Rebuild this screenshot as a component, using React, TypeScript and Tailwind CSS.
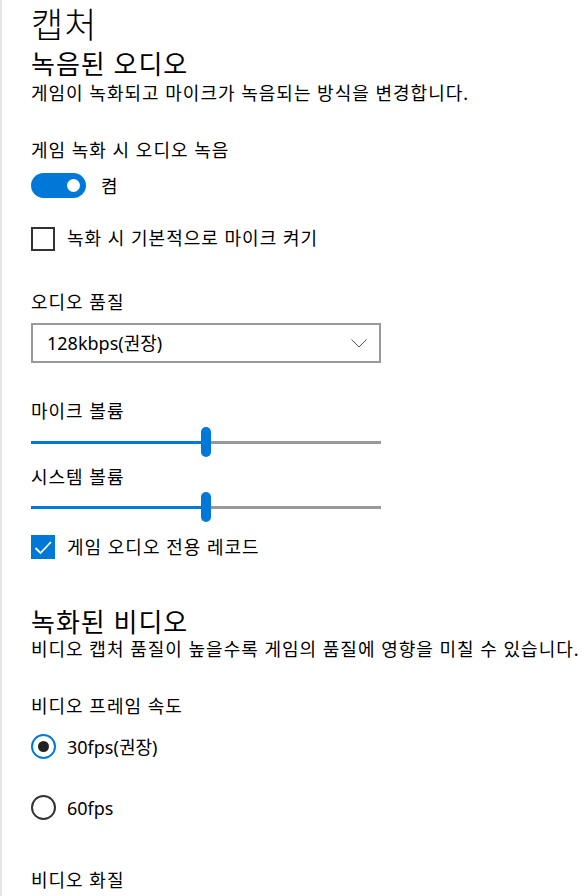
import { useState } from "react";

const font = {
  fontFamily: '"Noto Sans", "Noto Sans CJK KR", sans-serif',
};

function Slider({ value }: { value: number }) {
  return (
    <div className="relative h-[30px] w-[350px]">
      <div className="absolute left-0 right-0 top-[14px] flex h-[3px]">
        <div className="h-full bg-[#0078d7]" style={{ width: `${value}%` }} />
        <div className="h-full flex-1 bg-[#999999]" />
      </div>
      <div
        className="absolute top-0 h-[30px] w-[10px] rounded-full bg-[#0078d7]"
        style={{ left: `calc(${value}% - 5px)` }}
      />
    </div>
  );
}

function Check({ on }: { on: boolean }) {
  return (
    <span
      className={`flex h-[24px] w-[24px] shrink-0 items-center justify-center ${
        on ? "bg-[#0078d7]" : "border-2 border-[#333333]"
      }`}
    >
      {on && (
        <svg width="24" height="24" viewBox="0 0 24 24">
          <polyline
            points="4.5,13 9.5,18 20,7"
            fill="none"
            stroke="white"
            strokeWidth="1.8"
          />
        </svg>
      )}
    </span>
  );
}

export default function App() {
  const [audioOn, setAudioOn] = useState(true);
  const [micDefault, setMicDefault] = useState(false);
  const [gameOnly, setGameOnly] = useState(true);
  const [fps, setFps] = useState("30");

  return (
    <div
      className="min-h-screen border-l-2 border-[#e6e6e6] bg-white pl-[29px] text-black"
      style={font}
    >
      <h1 className="h-[50px] text-[35px] font-light leading-[50px] tracking-[1px]">
        캡처
      </h1>

      <h2 className="h-[28px] text-[26px] leading-[28px] tracking-[1px]">
        녹음된 오디오
      </h2>
      <p className="mt-[3px] h-[24px] text-[18px] leading-[24px] tracking-[1px]">
        게임이 녹화되고 마이크가 녹음되는 방식을 변경합니다.
      </p>

      <div className="mt-[33px] h-[24px] text-[18px] leading-[24px] tracking-[1px]">
        게임 녹화 시 오디오 녹음
      </div>
      <div className="mt-[11px] flex h-[25px] items-center">
        <button
          type="button"
          onClick={() => setAudioOn(!audioOn)}
          className={`flex h-[25px] w-[55px] items-center rounded-full px-[6px] ${
            audioOn ? "justify-end bg-[#0078d7]" : "justify-start border-2 border-[#333333] bg-white"
          }`}
        >
          <span
            className={`block h-[13px] w-[13px] rounded-full ${
              audioOn ? "bg-white" : "bg-[#333333]"
            }`}
          />
        </button>
        <span className="ml-[15px] text-[18px] leading-[24px]">
          {audioOn ? "켬" : "끔"}
        </span>
      </div>

      <label
        onClick={() => setMicDefault(!micDefault)}
        className="mt-[29px] flex h-[24px] cursor-pointer items-center"
      >
        <Check on={micDefault} />
        <span className="ml-[12px] -translate-y-[1px] text-[18px] leading-[24px] tracking-[1px]">
          녹화 시 기본적으로 마이크 켜기
        </span>
      </label>

      <div className="mt-[39px] h-[24px] text-[18px] leading-[24px] tracking-[1px]">
        오디오 품질
      </div>
      <div className="mt-[9px] flex h-[40px] w-[350px] items-center justify-between border-2 border-[#999999] bg-white pl-[14px] pr-[12px]">
        <span className="text-[18px] leading-[24px]">128kbps(권장)</span>
        <svg width="16" height="9" viewBox="0 0 16 9">
          <polyline
            points="0.5,0.5 8,8 15.5,0.5"
            fill="none"
            stroke="#555555"
            strokeWidth="1"
          />
        </svg>
      </div>

      <div className="mt-[36px] h-[24px] text-[18px] leading-[24px] tracking-[1px]">
        마이크 볼륨
      </div>
      <div className="mt-[4px]">
        <Slider value={50} />
      </div>

      <div className="mt-[8px] h-[24px] text-[18px] leading-[24px] tracking-[1px]">
        시스템 볼륨
      </div>
      <div className="mt-[3px]">
        <Slider value={50} />
      </div>

      <label
        onClick={() => setGameOnly(!gameOnly)}
        className="mt-[13px] flex h-[24px] cursor-pointer items-center"
      >
        <Check on={gameOnly} />
        <span className="ml-[12px] text-[18px] leading-[24px] tracking-[1px]">
          게임 오디오 전용 레코드
        </span>
      </label>

      <h2 className="mt-[47px] h-[32px] text-[26px] leading-[32px] tracking-[1px]">
        녹화된 비디오
      </h2>
      <p className="h-[22px] whitespace-nowrap text-[18px] leading-[22px] tracking-[1px]">
        비디오 캡처 품질이 높을수록 게임의 품질에 영향을 미칠 수 있습니다.
      </p>

      <div className="mt-[34px] h-[24px] text-[18px] leading-[24px] tracking-[1px]">
        비디오 프레임 속도
      </div>
      {["30", "60"].map((v, i) => (
        <label
          key={v}
          onClick={() => setFps(v)}
          className={`flex h-[25px] cursor-pointer items-center ${
            i === 0 ? "mt-[16px]" : "mt-[36px]"
          }`}
        >
          <span
            className={`flex h-[25px] w-[25px] items-center justify-center rounded-full border-[2.5px] ${
              fps === v ? "border-[#0078d7]" : "border-[#333333]"
            }`}
          >
            {fps === v && (
              <span className="block h-[11px] w-[11px] rounded-full bg-[#222222]" />
            )}
          </span>
          <span className="ml-[11px] text-[18px] leading-[24px]">
            {v === "30" ? "30fps(권장)" : "60fps"}
          </span>
        </label>
      ))}

      <div className="mt-[48px] h-[24px] text-[18px] leading-[24px] tracking-[1px]">
        비디오 화질
      </div>
    </div>
  );
}
